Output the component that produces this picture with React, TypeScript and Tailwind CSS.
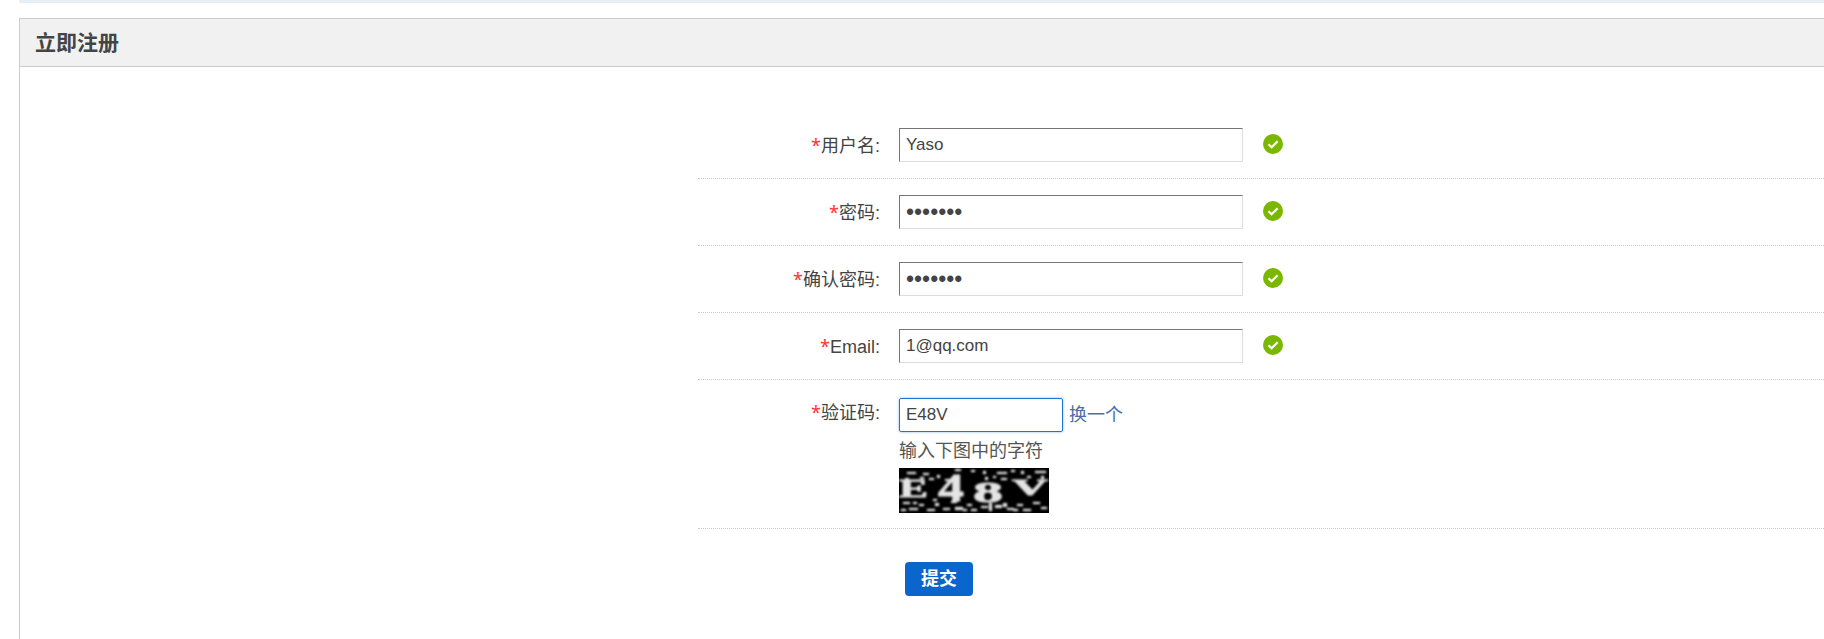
const font = { fontFamily: '"Liberation Sans", "Noto Sans CJK SC", sans-serif' };

const rows = [
  { label: "用户名:", value: "Yaso", type: "text" },
  { label: "密码:", value: "1234567", type: "password" },
  { label: "确认密码:", value: "1234567", type: "password" },
  { label: "Email:", value: "1@qq.com", type: "text" },
];

const noise = [
  [8, 4, 9, 2], [24, 5, 6, 2], [30, 10, 5, 2], [21, 9, 4, 2], [38, 7, 3, 3], [6, 10, 4, 2], [46, 11, 5, 2],
  [56, 1, 6, 2], [72, 2, 4, 2], [84, 3, 3, 3], [86, 9, 3, 3], [98, 4, 10, 2], [102, 10, 6, 2],
  [112, 2, 4, 2], [122, 3, 3, 3], [128, 8, 4, 2], [136, 3, 11, 2], [142, 8, 3, 3], [94, 8, 3, 2],
  [4, 34, 7, 2], [10, 40, 9, 2], [20, 36, 5, 2], [28, 41, 8, 2], [36, 35, 4, 3], [44, 40, 7, 2],
  [52, 33, 6, 2], [56, 39, 8, 3], [68, 36, 5, 2], [72, 41, 6, 2], [82, 38, 7, 2], [90, 35, 3, 8],
  [96, 37, 7, 3], [104, 35, 4, 4], [108, 40, 7, 2], [118, 36, 6, 2], [124, 41, 8, 2], [134, 34, 7, 2],
  [142, 39, 6, 2], [14, 34, 4, 2], [34, 31, 4, 2], [64, 41, 4, 2], [114, 41, 5, 2], [2, 41, 5, 2],
];

const glyphs = [
  { char: "E", x: 0, y: 29, size: 25, width: 29 },
  { char: "4", x: 39, y: 33, size: 40, width: 26 },
  { char: "8", x: 74, y: 34, size: 30, width: 30 },
  { char: "V", x: 113, y: 27, size: 24, width: 36 },
];

function Check() {
  return (
    <svg width="20" height="20" viewBox="0 0 20 20" className="block">
      <circle cx="10" cy="10" r="10" fill="#7ab800" />
      <path d="M5.5 10.3 8.6 13.2 14.6 7.2" fill="none" stroke="#fff" strokeWidth="2.2" />
    </svg>
  );
}

function Captcha() {
  return (
    <svg width="150" height="45" viewBox="0 0 150 45" className="block bg-black">
      <g fill="#e4e4e4" stroke="#e4e4e4" strokeWidth="0.2" style={{ filter: "blur(0.8px)" }}>
        {noise.map(([x, y, w, h], i) => (
          <rect key={i} x={x} y={y} width={w} height={h} />
        ))}
        <g fontFamily='"Liberation Serif", serif' fontWeight="700" strokeWidth="0.8">
          {glyphs.map((g) => (
            <text key={g.char} x={g.x} y={g.y} fontSize={g.size} textLength={g.width} lengthAdjust="spacingAndGlyphs">
              {g.char}
            </text>
          ))}
        </g>
      </g>
    </svg>
  );
}

export default function App() {
  return (
    <div className="h-[639px] overflow-hidden bg-white pl-[19px] text-[18px] text-[#444]" style={font}>
      <div className="h-[3px] bg-[#e8eef6]" />
      <div className="mt-[15px] h-[700px] border-l border-t border-[#ccc]">
        <div className="flex h-[48px] items-center border-b border-[#ccc] bg-[#f1f1f1] pl-[15px] text-[21px] font-bold leading-none text-[#444]">
          立即注册
        </div>
        <div className="ml-[678px] pt-[45px]">
          {rows.map((row) => (
            <div key={row.label} className="flex border-b border-dotted border-[#ccc] py-[16px]">
              <div className="w-[182px] pt-[5px] text-right leading-[24px]">
                <span className="font-['Noto_Sans'] text-[#f33]">*</span>
                {row.label}
              </div>
              <input
                readOnly
                type={row.type}
                value={row.value}
                className={
                  row.type === "password"
                    ? "ml-[19px] h-[34px] w-[344px] border border-t-[#767676] border-l-[#767676] border-r-[#ddd] border-b-[#ddd] px-[6px] text-[23px] text-[#444] outline-none"
                    : "ml-[19px] h-[34px] w-[344px] border border-t-[#767676] border-l-[#767676] border-r-[#ddd] border-b-[#ddd] px-[6px] text-[17px] text-[#444] outline-none"
                }
              />
              <div className="ml-[20px] pt-[6px]">
                <Check />
              </div>
            </div>
          ))}
          <div className="flex border-b border-dotted border-[#ccc] pb-[15px] pt-[18px]">
            <div className="w-[182px] pt-[2px] text-right leading-[24px]">
              <span className="font-['Noto_Sans'] text-[#f33]">*</span>
              验证码:
            </div>
            <div className="ml-[19px]">
              <div className="flex items-center">
                <input
                  readOnly
                  value="E48V"
                  className="h-[34px] w-[164px] rounded-[2px] border border-[#1f73d2] px-[6px] text-[17px] text-[#444] shadow-[0_0_3px_#8fbce8] outline-none"
                />
                <a className="ml-[6px] text-[#4a6fa5]">换一个</a>
              </div>
              <div className="mt-[7px] leading-[24px] text-[#555]">输入下图中的字符</div>
              <div className="mt-[5px]">
                <Captcha />
              </div>
            </div>
          </div>
          <div className="pl-[207px] pt-[33px]">
            <button className="block h-[34px] w-[68px] rounded-[4px] bg-[#0a66cc] text-[18px] font-bold text-white">
              提交
            </button>
          </div>
        </div>
      </div>
    </div>
  );
}
